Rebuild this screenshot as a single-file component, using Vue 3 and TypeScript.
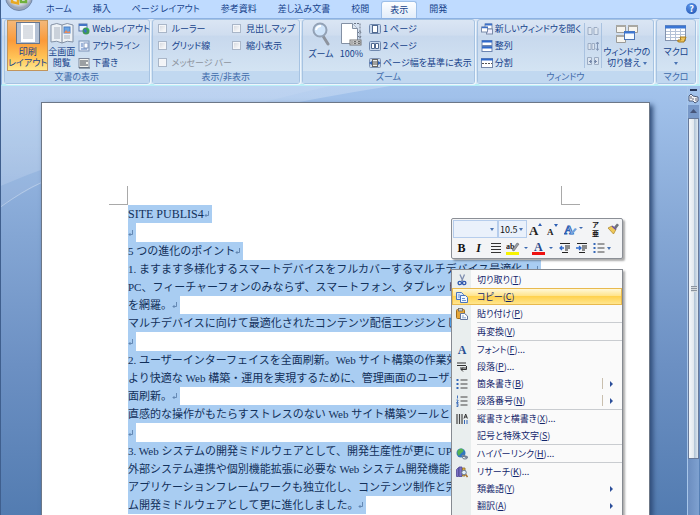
<script setup lang="ts">
import { ref } from 'vue'

interface MenuItem {
  label: string
  key: string
  tail?: string
  icon?: string
  separated?: boolean
  arrow?: boolean
  split?: boolean
}
interface Line {
  text: string
  kind?: 'title' | 'blank' | 'full'
  mark?: boolean
}

const tabs = ['ホーム', '挿入', 'ページ レイアウト', '参考資料', '差し込み文書', '校閲', '表示', '開発']
const activeTab = ref('表示')

const viewModes = [
  { label: 'Webレイアウト', icon: 'web' },
  { label: 'アウトライン', icon: 'outline' },
  { label: '下書き', icon: 'draft' },
]
const toggles = [
  { id: 'ruler', label: 'ルーラー', disabled: false },
  { id: 'map', label: '見出しマップ', disabled: false },
  { id: 'grid', label: 'グリッド線', disabled: false },
  { id: 'thumbs', label: '縮小表示', disabled: false },
  { id: 'bar', label: 'メッセージ バー', disabled: true },
]
const zoomModes = [
  { label: '1 ページ', icon: 'onePage' },
  { label: '2 ページ', icon: 'twoPage' },
  { label: 'ページ幅を基準に表示', icon: 'pageWidth' },
]
const windowModes = [
  { label: '新しいウィンドウを開く', icon: 'newWindow' },
  { label: '整列', icon: 'arrange' },
  { label: '分割', icon: 'split' },
]
const compareModes = [
  { label: '並べて比較', icon: 'sideBySide' },
  { label: '同時にスクロール', icon: 'syncScroll' },
  { label: 'ウィンドウの位置を元に戻す', icon: 'resetPos' },
]

const lines: Line[] = [
  { text: 'SITE PUBLIS4', kind: 'title', mark: true },
  { text: '', kind: 'blank', mark: true },
  { text: '5 つの進化のポイント', mark: true },
  { text: '1. ますます多様化するスマートデバイスをフルカバーするマルチデバイス最適化！', mark: true },
  { text: 'PC、フィーチャーフォンのみならず、スマートフォン、タブレット', kind: 'full' },
  { text: 'を網羅。', mark: true },
  { text: 'マルチデバイスに向けて最適化されたコンテンツ配信エンジンとして', kind: 'full' },
  { text: '', kind: 'blank', mark: true },
  { text: '2. ユーザーインターフェイスを全面刷新。Web サイト構築の作業効', kind: 'full' },
  { text: 'より快適な Web 構築・運用を実現するために、管理画面のユーザー', kind: 'full' },
  { text: '面刷新。', mark: true },
  { text: '直感的な操作がもたらすストレスのない Web サイト構築ツールとし', kind: 'full' },
  { text: '', kind: 'blank', mark: true },
  { text: '3. Web システムの開発ミドルウェアとして、開発生産性が更に UP', kind: 'full' },
  { text: '外部システム連携や個別機能拡張に必要な Web システム開発機能を', kind: 'full' },
  { text: 'アプリケーションフレームワークも独立化し、コンテンツ制作と完', kind: 'full' },
  { text: 'ム開発ミドルウェアとして更に進化しました。', mark: true },
]

const menu: MenuItem[] = [
  { label: '切り取り', key: 'T', icon: 'cut' },
  { label: 'コピー', key: 'C', icon: 'copy' },
  { label: '貼り付け', key: 'P', icon: 'paste' },
  { label: '再変換', key: 'V', separated: true },
  { label: 'フォント', key: 'F', tail: '...', icon: 'font', separated: true },
  { label: '段落', key: 'P', tail: '...', icon: 'paragraph' },
  { label: '箇条書き', key: 'B', icon: 'bullets', arrow: true, split: true },
  { label: '段落番号', key: 'N', icon: 'numbers', arrow: true, split: true },
  { label: '縦書きと横書き', key: 'X', tail: '...', icon: 'direction', separated: true },
  { label: '記号と特殊文字', key: 'S' },
  { label: 'ハイパーリンク', key: 'H', tail: '...', icon: 'link', separated: true },
  { label: 'リサーチ', key: 'K', tail: '...', icon: 'research', separated: true },
  { label: '類義語', key: 'Y', arrow: true },
  { label: '翻訳', key: 'A', arrow: true },
]
const hovered = ref('コピー')

/* Small icons share a 12 x 12 box. */
const icons: Record<string, string> = {
  web: '<rect x="1" y="1" width="8" height="7" fill="#eef4fc" stroke="#5b78a8"/><path d="M1 1h8v2H1z" fill="#4474c4"/><circle cx="8" cy="8" r="3.5" fill="#3f9a55"/><path d="M5.5 7q2-2 3 0t-1 3q-2-1-2-3z" fill="#3a6fc0"/><path d="M9 5l2 2" stroke="#2c5" />',
  outline: '<rect x="1" y="1" width="10" height="10" fill="#e6eefa" stroke="#7c93b8"/><rect x="6" y="3" width="4" height="5" fill="#fff" stroke="#6b86b4" stroke-width=".8"/><path d="M3 4h2M3 6h2M3 9h6" stroke="#5b7fbb"/>',
  draft: '<rect x="1" y="1.500" width="10" height="9" fill="#f3f3ee" stroke="#7d879a"/><path d="M2 4h8M2 6h6M2 8h8" stroke="#444c58"/><path d="M1 11h11" stroke="#55606f"/>',
  onePage: '<rect x=".5" y="1.500" width="11" height="9" rx="1" fill="#c9d8ec" stroke="#6f88ae"/><rect x="3.500" y="2.500" width="5" height="7" fill="#fff" stroke="#51698f"/>',
  twoPage: '<rect x=".5" y="1.500" width="11" height="9" rx="1" fill="#c9d8ec" stroke="#6f88ae"/><path d="M2.500 3.500h3v5h-3zM6.500 3.500h3v5h-3z" fill="#fff" stroke="#51698f"/>',
  pageWidth: '<rect x=".5" y="1.500" width="11" height="9" rx="1" fill="#c9d8ec" stroke="#7f93b3"/><rect x="3.500" y="2.500" width="5" height="7" fill="#eee" stroke="#666"/><path d="M0 6l3-2v4zM12 6l-3-2v4z" fill="#2d5fb4"/><path d="M4 5h4M4 7h4" stroke="#555"/>',
  newWindow: '<rect x="4" y="1" width="7" height="5" fill="#fff" stroke="#7b8baa"/><path d="M4 1.500h7" stroke="#3c70c8" stroke-width="2"/><rect x="5.500" y="6" width="6" height="5" fill="#eef" stroke="#7b8baa"/><rect x=".5" y="4" width="6" height="5" fill="#fff" stroke="#7b8baa"/><path d="M1 4.500h6" stroke="#3c70c8" stroke-width="1.500"/>',
  arrange: '<rect x="1" y=".5" width="10" height="5" fill="#fff" stroke="#6c85b1"/><path d="M1 1.500h10" stroke="#2f69cb" stroke-width="2"/><rect x="1" y="6.500" width="10" height="5" fill="#fff" stroke="#6c85b1"/><path d="M1 7.500h10" stroke="#2f69cb" stroke-width="2"/>',
  split: '<rect x=".5" y="1.500" width="11" height="9" fill="#fff" stroke="#7588aa"/><path d="M0 2.500h12" stroke="#2f69cb" stroke-width="2"/><path d="M1 6.500h10" stroke="#555" stroke-dasharray="2 1"/>',
  sideBySide: '<path d="M1 2.500h3l1 1v6H1zM7 2.500h3l1 1v6H7z" fill="#dce5f0" stroke="#9cacc3"/>',
  syncScroll: '<path d="M1 3.500h3v6H1zM5 3.500h2.500v6H5z" fill="#dce5f0" stroke="#9cacc3"/><path d="M10.500 2v8M9 4l1.500-2L12 4M9 8.500l1.500 2 1.500-2" fill="none" stroke="#8396b5"/>',
  resetPos: '<path d="M.5 2.500h4v7h-4zM7.500 2.500h4v7h-4z" fill="#dce5f0" stroke="#9cacc3"/><path d="M2 6.500h3M3.500 5v3M7 6.500h3M8.500 5v3" stroke="#7689aa"/>',
  cut: '<path d="M4 .5l3 7M8.500.5l-3 7" stroke="#7f8fb0" stroke-width="1.300" fill="none"/><circle cx="3.800" cy="9" r="1.700" fill="none" stroke="#2d56ae" stroke-width="1.300"/><circle cx="8.200" cy="9" r="1.700" fill="none" stroke="#2d56ae" stroke-width="1.300"/>',
  copy: '<path d="M.5 1.500h5l2 2v5h-7z" fill="#dbe8fb" stroke="#4974bd"/><path d="M4.500 4.500h5l2 2v5h-7z" fill="#f4f9ff" stroke="#4974bd"/><path d="M6 7.500h3M6 9.500h4M2 4h2M2 6h2" stroke="#6b95d6"/>',
  paste: '<rect x=".5" y="1.500" width="8" height="9" rx="1" fill="#e6a83a" stroke="#a06c1c"/><rect x="2.500" y=".5" width="4" height="2.500" fill="#d4d4d4" stroke="#666" stroke-width=".8"/><path d="M4.500 5.500h4l3 2.500v3.500h-7z" fill="#fbfcff" stroke="#6477a0"/><path d="M6 8h2M6 9.800h4" stroke="#86a3cf"/>',
  font: '<text x="6" y="10" text-anchor="middle" font-family="Liberation Serif" font-weight="bold" font-size="12" fill="#284f94">A</text>',
  paragraph: '<path d="M1 2h9M1 4.500h9M4 7h6" stroke="#333"/><path d="M10.500 5v3.500H5M7 6.500L5 8.500l2 2" fill="none" stroke="#333"/>',
  bullets: '<path d="M4.500 2h7M4.500 6h7M4.500 10h7" stroke="#444"/><path d="M.5 1h2v2h-2zM.5 5h2v2h-2zM.5 9h2v2h-2z" fill="#3668b8"/>',
  numbers: '<path d="M4.500 2h7M4.500 6h7M4.500 10h7" stroke="#444"/><path d="M1.500.5v3M.5 5h1.500v1L.5 7.500H2.500M.5 8.500h1.500v3H.5M.5 10H2" fill="none" stroke="#3668b8" stroke-width=".9"/>',
  direction: '<path d="M1 1v10M3.500 1v10M6 1v10" stroke="#444" stroke-width="1.200"/><path d="M8 5.500L9.700 1l1.700 4.500M8.500 4h2.500" fill="none" stroke="#333"/><path d="M8.500 7v4M11 7v4" stroke="#3668b8"/>',
  link: '<circle cx="5" cy="5" r="4.500" fill="#3277bd"/><path d="M1.500 3q3-3.500 5-2 2 2-.5 3.500T3 8Q.8 6 1.500 3z" fill="#55b552"/><path d="M6 8.500q1.500-2 3 0t2.500 0" stroke="#7d8799" stroke-width="1.400" fill="none"/><ellipse cx="9" cy="9.500" rx="2.500" ry="1.500" fill="none" stroke="#66758c"/>',
  research: '<path d="M.5 3.500l2-2v9h-2zM3 1h3v9.500H3z" fill="#7d72c4" stroke="#4d4696" stroke-width=".8"/><path d="M6.500 2h2.500v8H6.500z" fill="#e6b94c" stroke="#8f6c20" stroke-width=".8"/><circle cx="8" cy="6.500" r="2.300" fill="#e2f0fb" stroke="#6a7a93"/><path d="M9.700 8.500L11.500 11" stroke="#a86f2a" stroke-width="1.500"/>',
  center: '<path d="M1 1.500h10M1 4.500h10M1 7.500h10M1 10.500h10" stroke="#333"/>',
  outdent: '<path d="M1 1.500h10M6 4h5M6 6h5M6 8h3M3 10.500h6" stroke="#222" stroke-width="1.200"/><path d="M5 6H1M3 4L1 6l2 2" fill="none" stroke="#2f69cb" stroke-width="1.300"/>',
  indent: '<path d="M1 1.500h10M6 4h5M6 6h5M6 8h3M3 10.500h6" stroke="#222" stroke-width="1.200"/><path d="M0 6h4.500M3 4l2 2-2 2" fill="none" stroke="#2f69cb" stroke-width="1.300"/>',
  brush: '<path d="M7 4l3-3.500 2 1.500-3 4z" fill="#70747c"/><path d="M1 5l4-2 4 3.500L6.500 11z" fill="#efc85a" stroke="#a98327" stroke-width=".7"/><path d="M5 3l4 3.500" stroke="#6b4fa0" stroke-width="1.500"/>',
}
</script>

<template>
  <div class="app">
    <header class="tabs">
      <button class="orb" aria-label="Office">
        <svg width="28" height="28" viewBox="0 0 28 28" aria-hidden="true">
          <defs>
            <radialGradient id="orbFill" cx="50%" cy="40%">
              <stop offset="0" stop-color="#fff" />
              <stop offset=".7" stop-color="#dfe3ea" />
              <stop offset="1" stop-color="#9aa5b8" />
            </radialGradient>
          </defs>
          <circle cx="14" cy="14" r="13.500" fill="url(#orbFill)" stroke="#7288aa" />
          <path d="M7 14v5l6 1.500v-6" fill="none" stroke="#e9a920" stroke-width="2.500" />
          <path d="M8 8h5v7" fill="none" stroke="#e8622a" stroke-width="2.500" />
          <path d="M15 12h6v7h-5z" fill="none" stroke="#70b03c" stroke-width="2.500" />
        </svg>
      </button>
      <nav class="tablist" role="tablist">
        <button
          v-for="tab in tabs"
          :key="tab"
          role="tab"
          class="tab"
          :class="{ active: tab === activeTab }"
          :aria-selected="tab === activeTab"
          @click="activeTab = tab"
        >{{ tab }}</button>
      </nav>
      <button class="help" aria-label="ヘルプ">?</button>
    </header>

    <section class="ribbon">
      <div class="group">
        <div class="body">
          <button class="big pressed">
            <svg width="24" height="22" viewBox="0 0 24 22" aria-hidden="true">
              <rect x=".5" y=".5" width="23" height="21" fill="#b4c1d4" stroke="#66758c" />
              <rect x="5" y="1" width="14" height="19" fill="#fff" />
              <path d="M7 4h10M7 6h10M7 8h10M7 10h10M7 12h10M7 14h10M7 16h10" stroke="#b4bcc8" />
            </svg>
            <span>印刷<br>レイアウト</span>
          </button>
          <button class="big">
            <svg width="24" height="22" viewBox="0 0 24 22" aria-hidden="true">
              <path d="M1 3q6-3 11 0 5-3 11 0v17q-6-2-11 1-5-3-11-1z" fill="#eef2f6" stroke="#8391a5" />
              <path d="M12 3v18" stroke="#7d8a9d" />
              <path d="M4 6h6M4 8h6M4 10h6M4 12h6M4 14h6M4 16h6M14 14h6M14 16h6" stroke="#a6b0be" />
              <rect x="14" y="5" width="6" height="6" fill="#6ba4e4" stroke="#4a7fc4" />
              <path d="M14 11l2-3 2 2 2-1v2z" fill="#e58a5c" />
            </svg>
            <span>全画面<br>閲覧</span>
          </button>
          <div class="stack">
            <button v-for="m in viewModes" :key="m.label" class="small">
              <svg class="ico" viewBox="0 0 12 12" aria-hidden="true" v-html="icons[m.icon]" />{{ m.label }}
            </button>
          </div>
        </div>
        <h2>文書の表示</h2>
      </div>

      <div class="group">
        <div class="body toggles">
          <label v-for="t in toggles" :key="t.id" :for="t.id" :class="{ off: t.disabled }">
            <input :id="t.id" type="checkbox" :disabled="t.disabled">{{ t.label }}
          </label>
        </div>
        <h2>表示/非表示</h2>
      </div>

      <div class="group">
        <div class="body">
          <button class="big">
            <svg width="22" height="24" viewBox="0 0 22 24" aria-hidden="true">
              <path d="M13 14l5 8" stroke="#8d939d" stroke-width="3" stroke-linecap="round" />
              <circle cx="10" cy="8" r="6.500" fill="#cfe4fa" stroke="#93a2b6" stroke-width="2" />
              <path d="M6 8q1-4 5-4" stroke="#fff" stroke-width="2" fill="none" />
            </svg>
            <span>ズーム</span>
          </button>
          <button class="big">
            <svg width="22" height="24" viewBox="0 0 22 24" aria-hidden="true">
              <path d="M1.500 1.500h11l5 5v15h-16z" fill="#fff" stroke="#8390a4" />
              <path d="M12.500 1.500v5h5" fill="#dde5ef" stroke="#8390a4" />
              <path d="M14 1.500h6v16M18 11l2-2 1 2M18 14l2 2 1-2" fill="none" stroke="#6c7686" stroke-dasharray="2 1" />
              <rect x="10" y="18" width="11" height="5" fill="#e8e8e8" stroke="#777" />
              <path d="M12 19v3M14 19.500h2v2h-2zM18 19.500h2v2h-2z" fill="none" stroke="#555" stroke-width=".8" />
            </svg>
            <span>100%</span>
          </button>
          <div class="stack">
            <button v-for="m in zoomModes" :key="m.label" class="small">
              <svg class="ico" viewBox="0 0 12 12" aria-hidden="true" v-html="icons[m.icon]" />{{ m.label }}
            </button>
          </div>
        </div>
        <h2>ズーム</h2>
      </div>

      <div class="group">
        <div class="body">
          <div class="stack grow">
            <button v-for="m in windowModes" :key="m.label" class="small">
              <svg class="ico" viewBox="0 0 12 12" aria-hidden="true" v-html="icons[m.icon]" />{{ m.label }}
            </button>
          </div>
          <div class="stack compare">
            <button v-for="m in compareModes" :key="m.icon" class="small" disabled :aria-label="m.label">
              <svg class="ico" viewBox="0 0 12 12" aria-hidden="true" v-html="icons[m.icon]" />
            </button>
          </div>
          <button class="big">
            <svg width="24" height="22" viewBox="0 0 24 22" aria-hidden="true">
              <path d="M1.500 3.500h9v7h-9zM13.500 3.500h9v7h-9zM1.500 13.500h9v7h-9z" fill="#f6f4ee" stroke="#9b9b98" />
              <path d="M1 4h10M13 4h10M1 14h10" stroke="#a9a8a2" stroke-width="2" />
              <rect x="9.500" y="9.500" width="10" height="8" fill="#f5faff" stroke="#4c74b4" />
              <path d="M9 10.500h11" stroke="#3b76d4" stroke-width="2" />
            </svg>
            <span>ウィンドウの<br>切り替え <i class="caret" /></span>
          </button>
        </div>
        <h2>ウィンドウ</h2>
      </div>

      <div class="group">
        <div class="body">
          <button class="big">
            <svg width="24" height="22" viewBox="0 0 24 22" aria-hidden="true">
              <rect x="1.500" y="3.500" width="20" height="15" fill="#fff" stroke="#8292ad" />
              <path d="M1 5h21" stroke="#3b76d4" stroke-width="3" />
              <path d="M2 9.500h19M2 12.500h19M2 15.500h19M6.500 7v11M11.500 7v11M16.500 7v11" stroke="#b5c2d6" />
              <path d="M16 15h6l-2 5h-5q-2 0-1-2h3z" fill="#efc45a" stroke="#a37a22" />
            </svg>
            <span>マクロ<br><i class="caret" /></span>
          </button>
        </div>
        <h2>マクロ</h2>
      </div>
    </section>

    <main class="desk">
      <svg class="swoosh" viewBox="0 0 700 430" preserveAspectRatio="none" aria-hidden="true">
        <defs>
          <linearGradient id="glow" x1="0" y1="0" x2="0" y2="1">
            <stop offset="0" stop-color="#fff" stop-opacity=".24" />
            <stop offset="1" stop-color="#fff" stop-opacity=".14" />
          </linearGradient>
        </defs>
        <path d="M0 0H390Q140 40 0 100z" fill="url(#glow)" />
        <path d="M0 0H330Q110 50 0 121z" fill="#fff" fill-opacity=".07" />
        <path d="M0 121Q22 105 40 97" stroke="#fff" stroke-opacity=".3" fill="none" />
      </svg>

      <article class="page">
        <div class="corners"><i class="corner left" /><i class="corner right" /></div>
        <div class="text">
          <p v-for="(line, i) in lines" :key="i" :class="line.kind">
            <span class="sel">{{ line.text }}<svg v-if="line.mark" class="ret" viewBox="0 0 6 8" aria-hidden="true"><path d="M4.500 1v4.500H1M2.500 4L1 5.500 2.500 7" fill="none" stroke="#5d81ad" stroke-width=".9" /></svg></span>
          </p>
        </div>
      </article>

      <aside class="scroll">
        <i class="splitter" />
        <button class="ruler" aria-label="ルーラー">
          <svg width="11" height="11" viewBox="0 0 11 11" aria-hidden="true">
            <path d="M1 3l2-2 2 2 5 1v4L7 10 5 8H1z" fill="#f3f4f8" stroke="#4c5a78" />
            <path d="M3 3v3M5 5v2M8 5v3" stroke="#667" />
          </svg>
        </button>
        <button class="up" aria-label="上へ">
          <svg width="7" height="5" viewBox="0 0 7 5" aria-hidden="true"><path d="M0 4l3.500-4L7 4z" fill="#46557a" /></svg>
        </button>
        <div class="track"><div class="thumb"><i class="grip" /></div></div>
      </aside>

      <div class="float">
        <div class="mini" role="toolbar">
          <div class="bar">
            <span class="combo font"><select aria-label="フォント"><option /></select><i class="caret" /></span>
            <span class="combo size"><select aria-label="サイズ"><option>10.5</option></select><i class="caret" /></span>
            <button aria-label="拡大">
              <svg width="14" height="14" viewBox="0 0 14 14"><text x="0" y="13" font-size="13" class="glyph">A</text><path d="M9 4l2-3 2 3z" fill="#2d5fb4" /></svg>
            </button>
            <button aria-label="縮小">
              <svg width="14" height="14" viewBox="0 0 14 14"><text x="1" y="13" font-size="9" class="glyph">A</text><path d="M8 2h4l-2 3z" fill="#2d5fb4" /></svg>
            </button>
            <button aria-label="スタイル" class="wide">
              <svg width="20" height="14" viewBox="0 0 20 14"><text x="0" y="12" font-size="13" class="glyph outline">A</text><path d="M6 12l5-6 2 1-5 6z" fill="#6fa0dc" /><path d="M15 5h4l-2 2z" fill="#3a68b0" /></svg>
            </button>
            <button aria-label="ルビ" class="ruby"><span>ア</span><span>亜</span></button>
            <button aria-label="書式のコピー"><svg class="ico" viewBox="0 0 12 12" v-html="icons.brush" /></button>
          </div>
          <div class="bar">
            <button class="bold" aria-label="太字">B</button>
            <button class="italic" aria-label="斜体">I</button>
            <button aria-label="中央揃え"><svg class="ico" viewBox="0 0 12 12" v-html="icons.center" /></button>
            <button aria-label="蛍光ペン" class="wide">
              <svg width="22" height="13" viewBox="0 0 22 13"><text x="0" y="7" font-size="8" class="glyph">ab</text><path d="M6 8l5-7 2 1-5 7z" fill="#9a9fa8" stroke="#555" stroke-width=".5" /><path d="M0 10h13v3H0z" fill="#f6f200" /><path d="M18 5h4l-2 2z" fill="#3a68b0" /></svg>
            </button>
            <button aria-label="フォントの色" class="wide">
              <svg width="22" height="13" viewBox="0 0 22 13"><text x="2" y="9" font-size="12" class="glyph blue">A</text><path d="M0 10h13v3H0z" fill="#ee1111" /><path d="M17 5h4l-2 2z" fill="#3a68b0" /></svg>
            </button>
            <button aria-label="インデント解除"><svg class="ico" viewBox="0 0 12 12" v-html="icons.outdent" /></button>
            <button aria-label="インデント"><svg class="ico" viewBox="0 0 12 12" v-html="icons.indent" /></button>
            <button aria-label="箇条書き"><svg class="ico" viewBox="0 0 12 12" v-html="icons.bullets" /></button>
            <i class="caret" />
          </div>
        </div>

        <ul class="menu" role="menu">
          <li v-for="item in menu" :key="item.label" :class="{ separated: item.separated }">
            <button role="menuitem" :class="{ hot: item.label === hovered }" @mouseenter="hovered = item.label">
              <span class="gutter"><svg v-if="item.icon" class="ico" viewBox="0 0 12 12" aria-hidden="true" v-html="icons[item.icon]" /></span>
              <span class="name">{{ item.label }}(<u>{{ item.key }}</u>){{ item.tail }}</span>
              <i v-if="item.split" class="bar-sep" />
              <i v-if="item.arrow" class="more" />
            </button>
          </li>
        </ul>
      </div>
    </main>
  </div>
</template>

<style>
body {
  margin: 0;
  overflow: hidden;
}
</style>

<style scoped>
* {
  box-sizing: border-box;
}
.app {
  display: flex;
  flex-direction: column;
  height: 100vh;
  overflow: hidden;
  border-left: 1px solid #3f5f8e;
  background: #bfdbff;
  font-family: "Noto Sans CJK JP", sans-serif;
  font-feature-settings: "palt";
  font-size: 9px;
  color: #15428b;
}
button,
select {
  margin: 0;
  padding: 0;
  border: 0;
  background: none;
  font: inherit;
  font-feature-settings: inherit;
  color: inherit;
}
svg {
  display: block;
  flex: none;
}
.ico {
  width: 12px;
  height: 12px;
}
.caret {
  display: inline-block;
  border: 2px solid transparent;
  border-top: 3px solid #4a74b4;
  border-bottom: 0;
  vertical-align: middle;
}

/* Tabs */
.tabs {
  position: relative;
  display: flex;
  justify-content: space-between;
  height: 18px;
  flex: none;
  padding: 0 3px 0 35px;
}
.orb {
  position: absolute;
  left: 4px;
  top: -17px;
}
.tablist {
  display: flex;
  gap: 1px;
}
.tab {
  padding: 0 10px;
  line-height: 18px;
  white-space: nowrap;
}
.tab.active {
  margin: 1px 1px 0;
  padding: 0 8px;
  line-height: 16px;
  border: 1px solid #9dbfe8;
  border-bottom: 0;
  border-radius: 3px 3px 0 0;
  background: linear-gradient(#fdfeff, #e2edfa);
}
.help {
  width: 11px;
  height: 11px;
  margin-top: 3px;
  border-radius: 50%;
  background: radial-gradient(circle at 40% 30%, #5d95ea, #1c4fae);
  color: #fff;
  font-weight: bold;
  line-height: 11px;
}

/* Ribbon */
.ribbon {
  display: grid;
  grid-template-columns: 146fr 149fr 173fr 178fr 40fr;
  gap: 2px;
  flex: none;
  height: 68px;
  padding: 0 3px 0 2px;
  border: 1px solid #8db2e3;
  border-right-color: #c5f3fb;
  border-bottom: 2px solid #b9f0f7;
  background: linear-gradient(#dbe6f4, #cfddef 25%, #c7d8ed 26%, #d8e8f5);
}
.group {
  display: flex;
  flex-direction: column;
  min-width: 0;
  border: 1px solid #a6c3e2;
  border-radius: 3px;
  box-shadow: 1px 1px 0 #eef6fd;
}
.group h2 {
  flex: none;
  margin: 0;
  font-size: 9px;
  font-weight: normal;
  line-height: 12px;
  text-align: center;
  color: #3e6aaa;
  background: #c1d8f0;
}
.body {
  display: flex;
  flex: 1;
  min-height: 0;
  padding: 0 2px;
}
.big {
  display: flex;
  flex-direction: column;
  align-items: center;
  flex: 1 0 auto;
  gap: 2px;
  padding-top: 2px;
  line-height: 11px;
  white-space: nowrap;
}
.big.pressed {
  border: 1px solid #c2955c;
  padding-top: 1px;
  background: linear-gradient(#f3b879, #fb9a3a 40%, #ffc457 75%, #ffe98d);
}
.stack {
  display: flex;
  flex-direction: column;
  padding-left: 3px;
}
.stack.grow {
  flex: 1;
  padding: 0 1px;
}
.compare {
  margin: 3px 1px;
  padding: 0 2px;
  border: solid #a9c2e0;
  border-width: 0 1px;
  justify-content: space-between;
}
.small {
  display: flex;
  align-items: center;
  gap: 2px;
  height: 17px;
  white-space: nowrap;
}
.compare .small {
  height: 15px;
}
.toggles {
  display: grid;
  grid-template-columns: 1fr 1fr;
  grid-auto-rows: 17px;
  padding: 0 2px 0 5px;
}
.toggles label {
  display: flex;
  align-items: center;
  gap: 5px;
  white-space: nowrap;
}
.toggles .off {
  color: #8e959f;
}
.toggles input {
  appearance: none;
  width: 9px;
  height: 9px;
  margin: 0;
  border: 1px solid #a9b6c8;
  background: linear-gradient(135deg, #d2d6dd, #fff);
  box-shadow: inset 0 0 0 1px #f4f6f9;
}
.toggles input:disabled {
  background: #f2f4f7;
}

/* Document area */
.desk {
  position: relative;
  display: flex;
  flex: 1;
  min-height: 0;
  padding: 0 1px 0 40px;
  background: linear-gradient(#a3c3ec, #84a6d4 35%, #6c90c3 65%, #537cb1);
}
.swoosh {
  position: absolute;
  inset: 0;
  width: 100%;
  height: 100%;
}
.page {
  position: relative;
  flex: 1;
  min-width: 0;
  margin: 16px 37px 0 0;
  padding-top: 83px;
  border: 1px solid #6c7787;
  border-bottom: 0;
  background: #fff;
  box-shadow: 3px 3px 5px #2f4c78;
  overflow: hidden;
}
.corners {
  display: flex;
  justify-content: space-between;
  padding: 0 69px 0 67px;
}
.corner {
  width: 19px;
  height: 19px;
  border: 0 solid #a9a9a9;
  border-bottom-width: 1px;
}
.corner.left {
  border-right-width: 1px;
}
.corner.right {
  border-left-width: 1px;
}
.text {
  padding: 0 87px 0 86px;
  font-family: "Liberation Serif", "Noto Sans CJK JP", serif;
  font-size: 11px;
  font-feature-settings: normal;
  color: #12305a;
  white-space: nowrap;
}
.text p {
  height: 18px;
  margin: 0;
  line-height: 18px;
}
.text .blank {
  height: 19px;
}
.text .title {
  font-size: 12px;
}
.sel {
  display: inline-flex;
  align-items: center;
  height: 100%;
  padding-right: 2px;
  background: #a9cdf2;
  vertical-align: top;
  white-space: pre;
}
.full .sel {
  display: flex;
}
.ret {
  width: 6px;
  height: 8px;
}

/* Scroll bar */
.scroll {
  position: relative;
  display: flex;
  flex-direction: column;
  align-items: center;
  width: 12px;
  padding-top: 3px;
  border-left: 1px solid #a9c7ea;
}
.splitter {
  width: 7px;
  height: 2px;
  margin-bottom: 2px;
  background: #27365a;
}
.up {
  display: grid;
  place-items: center;
  width: 100%;
  height: 13px;
  margin-top: 1px;
  background: #7898c8;
}
.track {
  display: flex;
  flex-direction: column;
  flex: 1;
  width: 100%;
  background: linear-gradient(90deg, #6b8dbf, #7fa1d0);
}
.thumb {
  display: grid;
  place-items: center;
  height: 86%;
  border: 1px solid #67799a;
  background: linear-gradient(90deg, #f4f7fa, #e3e9ef 50%, #b4c6d8 60%, #dfe8f0);
}
.grip {
  width: 6px;
  height: 6px;
  background: repeating-linear-gradient(#8b949f 0 1px, #d5dade 1px 2px);
}

/* Floating toolbar and context menu */
.float {
  position: absolute;
  left: 450px;
  top: 132px;
  width: 172px;
  color: #12256b;
}
.mini {
  display: flex;
  flex-direction: column;
  gap: 1px;
  height: 41px;
  padding: 1px;
  border: 1px solid #8b8f96;
  border-radius: 2px;
  background: #f3f4f6;
  box-shadow: 2px 2px 2px #0005;
}
.bar {
  display: flex;
  align-items: center;
  height: 18px;
}
.bar button {
  display: flex;
  justify-content: center;
  align-items: center;
  flex: 0 0 17px;
  color: #111;
}
.bar .wide {
  flex-basis: 26px;
}
.combo {
  display: flex;
  align-items: center;
  height: 18px;
  padding-right: 3px;
  border: 1px solid #b6cdec;
  background: #eaf1fb;
}
.combo select {
  appearance: none;
  flex: 1;
  min-width: 0;
  color: #111;
}
.combo.font {
  width: 47px;
}
.combo.size {
  width: 30px;
  padding-left: 1px;
}
.glyph {
  font-family: "Liberation Serif", serif;
  font-weight: bold;
  fill: #222;
}
.outline {
  fill: #dce9fb;
  stroke: #2f62b4;
}
.blue {
  fill: #27488a;
}
.bar .ruby {
  flex-direction: column;
  font-size: 7px;
  font-weight: bold;
  line-height: 9px;
}
.bold,
.italic {
  font: bold 12px "Liberation Serif", serif;
}
.italic {
  font-style: italic;
}
.menu {
  margin: 10px 0 0;
  padding: 1px 0 9px;
  list-style: none;
  border: 1px solid #868a91;
  background: linear-gradient(90deg, #e9eeee 19px, #fafafa 19px);
  box-shadow: 2px 2px 2px #0005;
}
.menu button {
  display: flex;
  align-items: center;
  width: 100%;
  height: 17px;
  padding-right: 8px;
  border: 1px solid transparent;
  text-align: left;
}
.menu .hot {
  border-color: #e8b94e;
  background: linear-gradient(#fff8d8, #ffe48c 45%, #ffd24f 50%, #ffe58e);
}
.gutter {
  display: grid;
  place-items: center;
  width: 18px;
}
.name {
  flex: 1;
  padding-left: 6px;
  white-space: nowrap;
}
.separated {
  background: linear-gradient(#c9ccd0, #c9ccd0) 25px 0 / 100% 1px no-repeat;
  padding-top: 1px;
}
.bar-sep {
  width: 1px;
  height: 11px;
  margin-right: 7px;
  background: #c9bfae;
}
.more {
  border: 3px solid transparent;
  border-left: 3px solid #2c4f9a;
  border-right: 0;
}
</style>
